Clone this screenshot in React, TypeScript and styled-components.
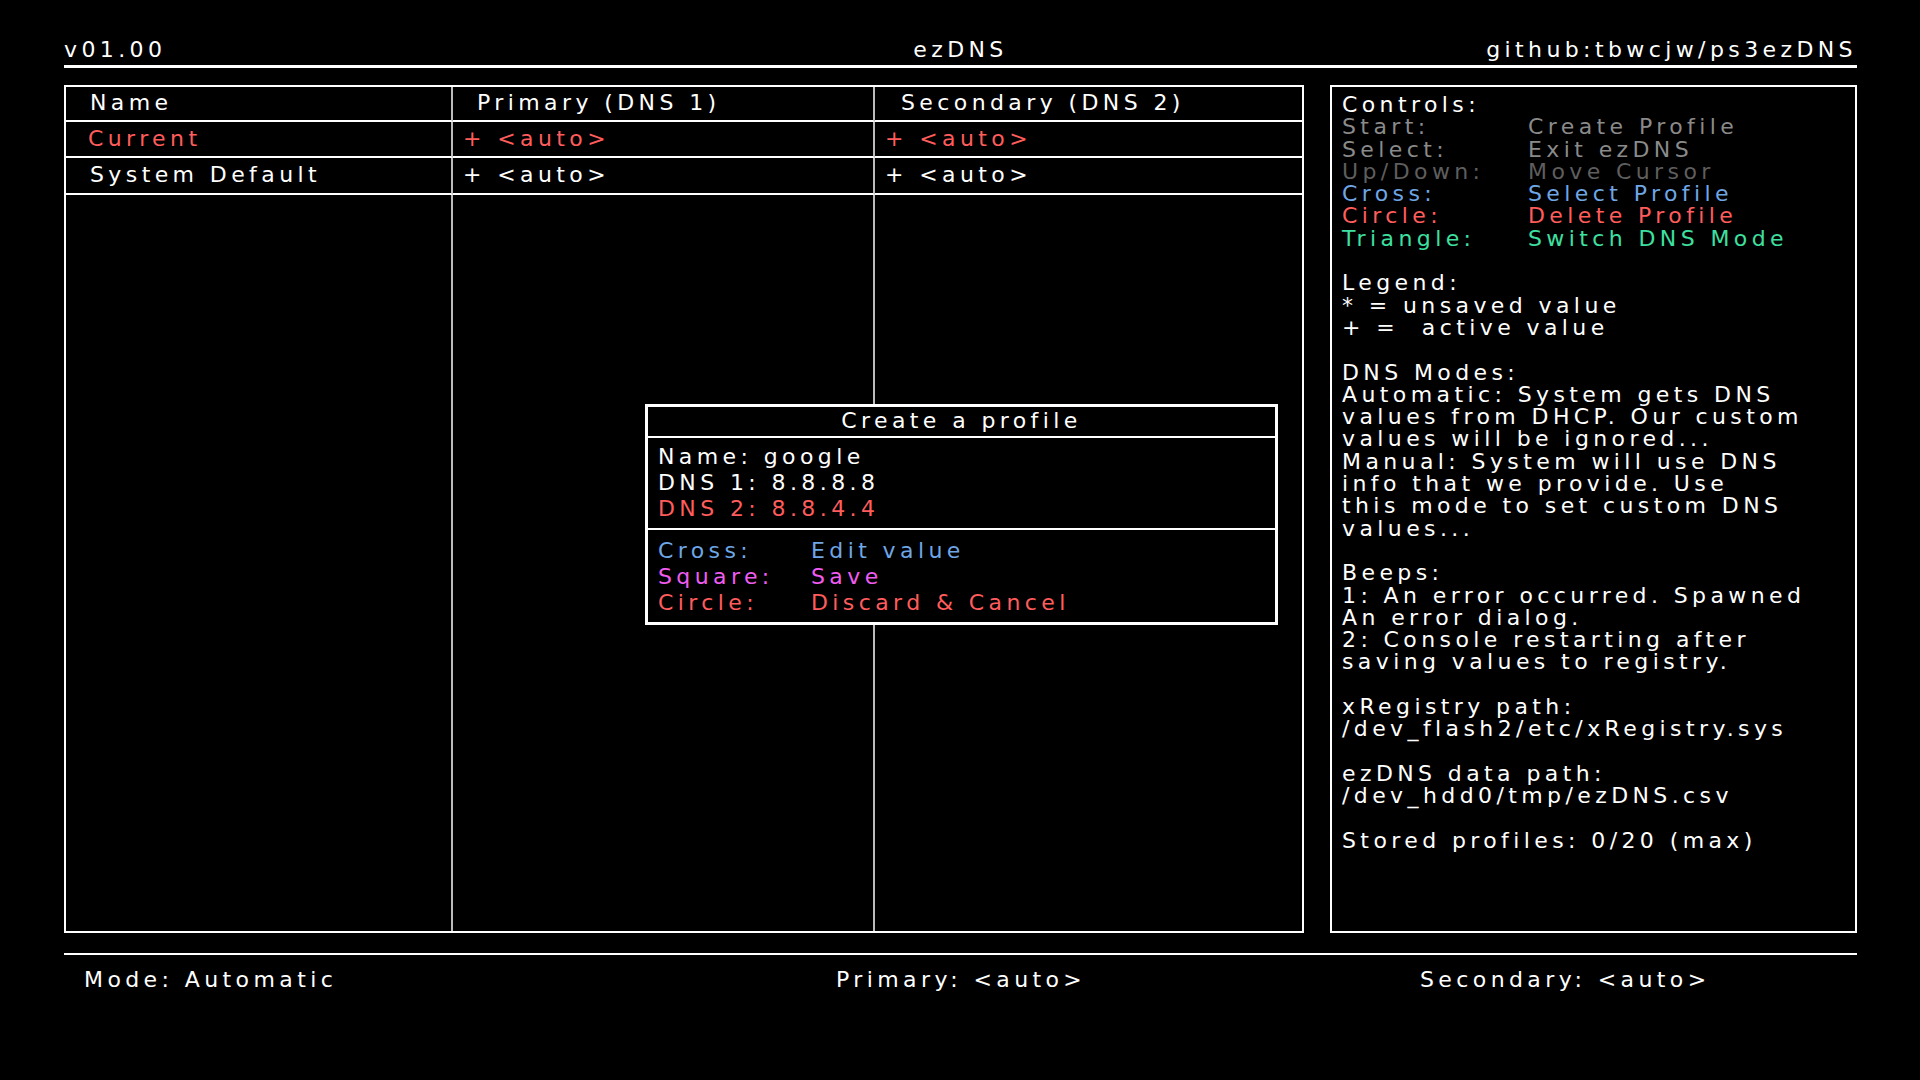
import React from "react";
import styled, { createGlobalStyle } from "styled-components";

const Global = createGlobalStyle`
  html, body { margin: 0; padding: 0; background: #000; }
  body { width: 1920px; height: 1080px; overflow: hidden; font-family: "DejaVu Sans", sans-serif; color: #fff; }
`;

const C = { red: "#ff5c5c", blue: "#6fa6e6", green: "#3ee0a0", gray: "#8a8a8a", dim: "#5e5e5e", pink: "#f05cf0" };

const Screen = styled.div`
  width: 1920px; height: 1080px; box-sizing: border-box; padding: 36px 63px 0 64px;
  display: flex; flex-direction: column;
  font-size: 22px; letter-spacing: 4.4px; line-height: 22.3px;
`;
const TopBar = styled.div`
  display: grid; grid-template-columns: 1fr auto 1fr; align-items: center;
  height: 29px; border-bottom: 3px solid #fff;
`;
const TopItem = styled.span<{ $align: string }>`
  justify-self: ${p => p.$align};
`;
const Main = styled.div`
  display: flex; gap: 26px; margin-top: 17px; height: 848px;
`;
const Table = styled.div`
  position: relative; width: 1240px; border: 2px solid #fff; box-sizing: border-box;
  display: grid; grid-template-columns: 387px 422px 1fr; grid-template-rows: 35px 36px 37px 1fr;
`;
const Cell = styled.div<{ $color?: string; $pad?: number; $last?: boolean; $rowEnd?: boolean }>`
  display: flex; align-items: center; padding-left: ${p => p.$pad ?? 10}px;
  color: ${p => p.$color || "#fff"};
  border-right: ${p => (p.$last ? "none" : "2px solid #bbb")};
  border-bottom: ${p => (p.$rowEnd ? "none" : "2px solid #fff")};
`;
const Side = styled.div`
  flex: 1; border: 2px solid #fff; box-sizing: border-box; padding: 7px 10px;
`;
const Line = styled.div<{ $color?: string }>`
  color: ${p => p.$color || "#fff"}; white-space: pre; height: 22.3px;
`;
const Ctrl = styled.div<{ $color: string }>`
  display: grid; grid-template-columns: 186px 1fr; color: ${p => p.$color}; white-space: pre; height: 22.3px;
`;
const Dialog = styled.div`
  position: absolute; left: 579px; top: 317px; width: 633px; height: 221px; box-sizing: border-box;
  border: 3px solid #fff; background: #000; display: flex; flex-direction: column;
`;
const DTitle = styled.div`
  height: 31px; display: flex; align-items: center; justify-content: center; border-bottom: 2px solid #fff;
`;
const DSection = styled.div<{ $grow?: boolean }>`
  padding: 6px 10px; line-height: 26px; ${p => p.$grow ? "flex: 1; padding-top: 8px;" : "height: 79px; border-bottom: 2px solid #fff;"}
`;
const DLine = styled.div<{ $color?: string }>`
  color: ${p => p.$color || "#fff"}; height: 26px;
`;
const DCtrl = styled.div<{ $color: string }>`
  display: grid; grid-template-columns: 153px 1fr; color: ${p => p.$color}; height: 26px;
`;
const Footer = styled.div`
  margin-top: 20px; border-top: 2px solid #fff; height: 50px;
  display: grid; grid-template-columns: 752px 584px 1fr; align-items: center; padding-left: 20px;
`;

export default function App() {
  return (
    <Screen>
      <Global />
      <TopBar>
        <TopItem $align="start">v01.00</TopItem>
        <TopItem $align="center">ezDNS</TopItem>
        <TopItem $align="end">github:tbwcjw/ps3ezDNS</TopItem>
      </TopBar>
      <Main>
        <Table>
          <Cell $pad={24}>Name</Cell>
          <Cell $pad={24}>Primary (DNS 1)</Cell>
          <Cell $pad={26} $last>Secondary (DNS 2)</Cell>
          <Cell $pad={22} $color={C.red}>Current</Cell>
          <Cell $color={C.red}>+ &lt;auto&gt;</Cell>
          <Cell $color={C.red} $last>+ &lt;auto&gt;</Cell>
          <Cell $pad={24}>System Default</Cell>
          <Cell>+ &lt;auto&gt;</Cell>
          <Cell $last>+ &lt;auto&gt;</Cell>
          <Cell $rowEnd />
          <Cell $rowEnd />
          <Cell $rowEnd $last />
          <Dialog>
            <DTitle>Create a profile</DTitle>
            <DSection>
              <DLine>Name: google</DLine>
              <DLine>DNS 1: 8.8.8.8</DLine>
              <DLine $color={C.red}>DNS 2: 8.8.4.4</DLine>
            </DSection>
            <DSection $grow>
              <DCtrl $color={C.blue}><span>Cross:</span><span>Edit value</span></DCtrl>
              <DCtrl $color={C.pink}><span>Square:</span><span>Save</span></DCtrl>
              <DCtrl $color={C.red}><span>Circle:</span><span>Discard &amp; Cancel</span></DCtrl>
            </DSection>
          </Dialog>
        </Table>
        <Side>
          <Line>Controls:</Line>
          <Ctrl $color={C.gray}><span>Start:</span><span>Create Profile</span></Ctrl>
          <Ctrl $color={C.gray}><span>Select:</span><span>Exit ezDNS</span></Ctrl>
          <Ctrl $color={C.dim}><span>Up/Down:</span><span>Move Cursor</span></Ctrl>
          <Ctrl $color={C.blue}><span>Cross:</span><span>Select Profile</span></Ctrl>
          <Ctrl $color={C.red}><span>Circle:</span><span>Delete Profile</span></Ctrl>
          <Ctrl $color={C.green}><span>Triangle:</span><span>Switch DNS Mode</span></Ctrl>
          <Line />
          <Line>Legend:</Line>
          <Line>* = unsaved value</Line>
          <Line>+ =  active value</Line>
          <Line />
          <Line>DNS Modes:</Line>
          <Line>Automatic: System gets DNS</Line>
          <Line>values from DHCP. Our custom</Line>
          <Line>values will be ignored...</Line>
          <Line>Manual: System will use DNS</Line>
          <Line>info that we provide. Use</Line>
          <Line>this mode to set custom DNS</Line>
          <Line>values...</Line>
          <Line />
          <Line>Beeps:</Line>
          <Line>1: An error occurred. Spawned</Line>
          <Line>An error dialog.</Line>
          <Line>2: Console restarting after</Line>
          <Line>saving values to registry.</Line>
          <Line />
          <Line>xRegistry path:</Line>
          <Line>/dev_flash2/etc/xRegistry.sys</Line>
          <Line />
          <Line>ezDNS data path:</Line>
          <Line>/dev_hdd0/tmp/ezDNS.csv</Line>
          <Line />
          <Line>Stored profiles: 0/20 (max)</Line>
        </Side>
      </Main>
      <Footer>
        <span>Mode: Automatic</span>
        <span>Primary: &lt;auto&gt;</span>
        <span>Secondary: &lt;auto&gt;</span>
      </Footer>
    </Screen>
  );
}
